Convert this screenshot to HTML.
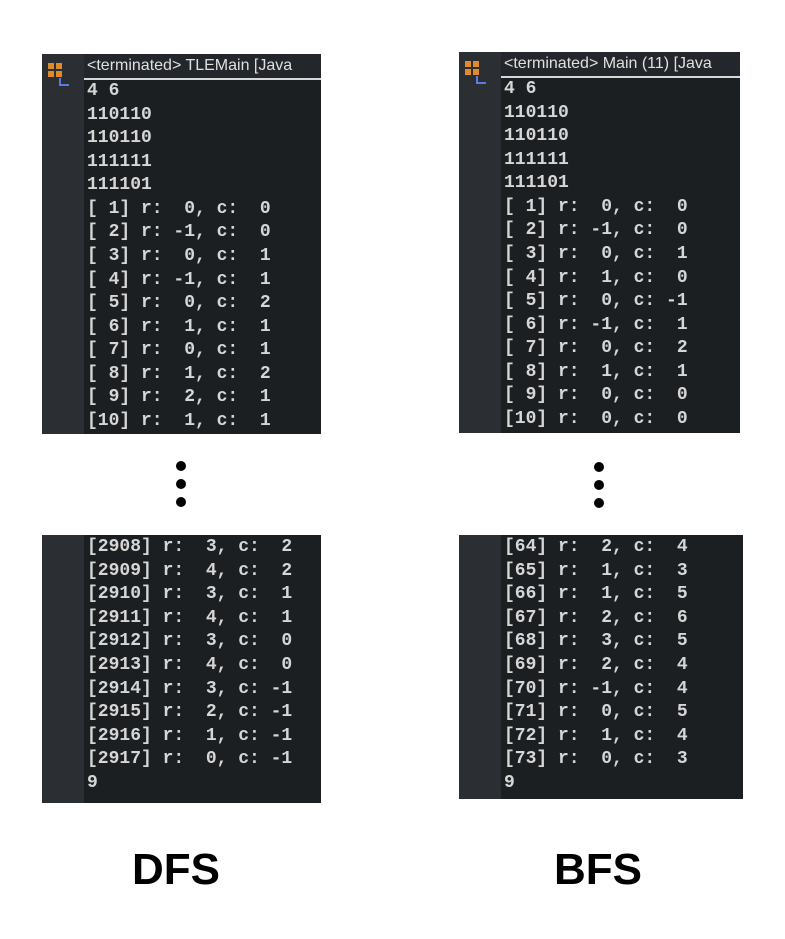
<!DOCTYPE html>
<html><head><style>
body{margin:0;width:785px;height:939px;background:#fff;position:relative;overflow:hidden;font-family:"Liberation Mono",monospace}
.p{position:absolute;background:#1c1f22}
.g{position:absolute;left:0;top:0;bottom:0;width:42px;background:#2b2e32}
.t{position:absolute;white-space:pre;color:#d6d6d6;font-weight:bold;font-size:18px}
.hd{position:absolute;left:42px;right:0;top:0;height:24px;background:#23262a;border-bottom:2px solid #d8d8d8;color:#e0e0e0;font-family:"Liberation Sans",sans-serif;font-size:16px;line-height:23px;padding-left:3px;white-space:nowrap;overflow:hidden}
.ic{position:absolute;left:6px;top:9px;width:14px;height:14px;background:linear-gradient(#2b2e32,#2b2e32) 6px 0/2px 14px no-repeat,linear-gradient(#2b2e32,#2b2e32) 0 6px/14px 2px no-repeat,#e08a2a}
.ic2{position:absolute;left:17px;top:24px;width:10px;height:8px;border-left:2px solid #5a7be0;border-bottom:2px solid #5a7be0;box-sizing:border-box}
.d{position:absolute;width:10px;height:10px;border-radius:50%;background:#000}
.lb{position:absolute;font-family:"Liberation Sans",sans-serif;font-weight:bold;font-size:44px;color:#000}
</style></head><body>
<div class="p" style="left:42px;top:54px;width:279px;height:380px"><div class="g"></div><div class="ic"></div><div class="ic2"></div>
<div class="hd">&lt;terminated&gt; TLEMain [Java</div>
<div class="t" style="left:45px;top:26px;line-height:23.57px">4 6
110110
110110
111111
111101
[ 1] r:  0, c:  0
[ 2] r: -1, c:  0
[ 3] r:  0, c:  1
[ 4] r: -1, c:  1
[ 5] r:  0, c:  2
[ 6] r:  1, c:  1
[ 7] r:  0, c:  1
[ 8] r:  1, c:  2
[ 9] r:  2, c:  1
[10] r:  1, c:  1</div></div>
<div class="p" style="left:459px;top:52px;width:281px;height:381px"><div class="g"></div><div class="ic"></div><div class="ic2"></div>
<div class="hd">&lt;terminated&gt; Main (11) [Java</div>
<div class="t" style="left:45px;top:26px;line-height:23.57px">4 6
110110
110110
111111
111101
[ 1] r:  0, c:  0
[ 2] r: -1, c:  0
[ 3] r:  0, c:  1
[ 4] r:  1, c:  0
[ 5] r:  0, c: -1
[ 6] r: -1, c:  1
[ 7] r:  0, c:  2
[ 8] r:  1, c:  1
[ 9] r:  0, c:  0
[10] r:  0, c:  0</div></div>
<div class="p" style="left:42px;top:535px;width:279px;height:268px"><div class="g"></div>
<div class="t" style="left:45px;top:1px;line-height:23.6px">[2908] r:  3, c:  2
[2909] r:  4, c:  2
[2910] r:  3, c:  1
[2911] r:  4, c:  1
[2912] r:  3, c:  0
[2913] r:  4, c:  0
[2914] r:  3, c: -1
[2915] r:  2, c: -1
[2916] r:  1, c: -1
[2917] r:  0, c: -1
9</div></div>
<div class="p" style="left:459px;top:535px;width:284px;height:264px"><div class="g"></div>
<div class="t" style="left:45px;top:1px;line-height:23.6px">[64] r:  2, c:  4
[65] r:  1, c:  3
[66] r:  1, c:  5
[67] r:  2, c:  6
[68] r:  3, c:  5
[69] r:  2, c:  4
[70] r: -1, c:  4
[71] r:  0, c:  5
[72] r:  1, c:  4
[73] r:  0, c:  3
9</div></div>
<div class="d" style="left:176px;top:461px"></div><div class="d" style="left:176px;top:479px"></div><div class="d" style="left:176px;top:497px"></div>
<div class="d" style="left:594px;top:462px"></div><div class="d" style="left:594px;top:480px"></div><div class="d" style="left:594px;top:498px"></div>
<div class="lb" style="left:132px;top:845px">DFS</div>
<div class="lb" style="left:554px;top:845px">BFS</div>
</body></html>
